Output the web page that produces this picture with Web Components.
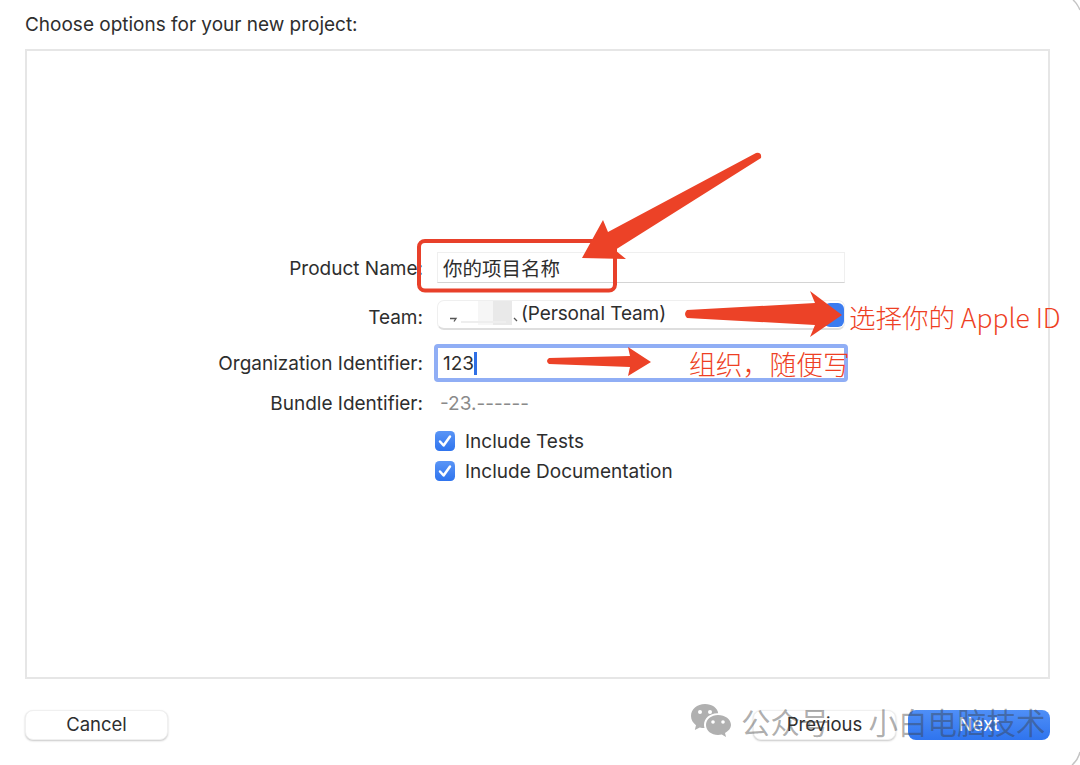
<!DOCTYPE html>
<html lang="en"><head><meta charset="utf-8"><title>Choose options</title>
<style>
html,body{margin:0;padding:0;background:#fff}
body{width:1080px;height:765px;overflow:hidden;font-family:Inter,"Noto Sans CJK SC",sans-serif;color:#2e2e2e}
</style></head><body>
<x-sheet>
  <span slot="title">Choose options for your new project:</span>
  <x-row label="Product Name:" h="31" top="0" nudge="1"><x-field>你的项目名称</x-field></x-row>
  <x-row label="Team:" h="30" top="17" nudge="2"><x-popup>(Personal Team)</x-popup></x-row>
  <x-row label="Organization Identifier:" h="36" top="14"><x-field focused>123</x-field></x-row>
  <x-row label="Bundle Identifier:" h="20" top="12"><span style="color:#8a8a8a;padding-left:3px">-23.------</span></x-row>
  <x-row h="24" top="17"><x-check>Include Tests</x-check></x-row>
  <x-row h="24" top="6"><x-check>Include Documentation</x-check></x-row>
  <x-button slot="left">Cancel</x-button>
  <x-button slot="right">Previous</x-button>
  <x-button slot="right" primary>Next</x-button>
</x-sheet>
<x-annotations></x-annotations>
<x-watermark></x-watermark>
<script>
function def(name, html, setup){
  customElements.define(name, class extends HTMLElement{
    constructor(){super();this.attachShadow({mode:'open'}).innerHTML=html;}
    connectedCallback(){ if(setup) setup(this,this.shadowRoot); }
  });
}
def('x-sheet',`<style>
:host{display:flex;flex-direction:column;width:1080px;height:765px;box-sizing:border-box;padding:0 30px 25px 25px}
.title{height:49px;box-sizing:border-box;padding-top:14px;font-size:19px;line-height:22px;letter-spacing:-.01px}
.panel{height:630px;box-sizing:border-box;border:2px solid #e6e6e6;background:#fff;padding-top:201px;display:flex;flex-direction:column}
.foot{display:flex;justify-content:space-between;margin-top:31px}
.r{display:flex;gap:12px}
</style>
<div class="title"><slot name="title"></slot></div>
<div class="panel"><slot></slot></div>
<div class="foot"><div class="r"><slot name="left"></slot></div><div class="r"><slot name="right"></slot></div></div>`);
def('x-row',`<style>
:host{display:grid;grid-template-columns:396px 408px;column-gap:14px;align-items:center;font-size:19px}
.l{text-align:right;white-space:nowrap}
.c{display:flex;align-items:center;min-width:0}
</style><div class="l"></div><div class="c"><slot></slot></div>`,(el,sr)=>{
  el.style.height=el.getAttribute('h')+'px';
  el.style.marginTop=(el.getAttribute('top')||0)+'px';
  const l=sr.querySelector('.l');l.textContent=el.getAttribute('label')||'';
  const n=el.getAttribute('nudge'); if(n) l.style.paddingTop=(2*n)+'px';
});
def('x-field',`<style>
:host{display:flex;flex:none;align-items:center;box-sizing:border-box;width:408px;height:31px;background:#fff;border:1px solid #efefef;border-bottom:1px solid #d4d4d4;padding-left:5px;font-size:19.500px;font-family:Inter,"Noto Sans CJK SC",sans-serif;white-space:nowrap}
:host([focused]){height:38px;width:414px;margin-left:-3px;border:4px solid #90aef5;border-radius:4px;padding-left:5px;font-size:19px}
.caret{display:none;width:3px;height:23px;background:#2f6fe6;margin-left:0}
:host([focused]) .caret{display:block}
</style><slot></slot><span class="caret"></span>`);
def('x-popup',`<style>
:host{display:flex;align-items:center;box-sizing:border-box;width:408px;height:30px;background:#fff;border:1px solid #efefef;border-bottom:2px solid #dedede;border-radius:7px;font-size:19px;letter-spacing:-.12px;white-space:nowrap;padding-bottom:3px}
.blur{display:flex;align-items:stretch;width:66px;height:24px;margin:0 7px 0 10px;flex:none;position:relative}
.blur i{display:block}
.blur svg{position:absolute;left:0;top:0}
.text{flex:1}
.btn{flex:none;width:20px;height:24px;margin-top:3px;background:#3b7cf0;border-radius:6px}
</style><span class="blur"><i style="width:30px"></i><i style="width:15px;background:#f6f6f6"></i><i style="width:19px;background:#e9e9e9"></i>
<svg width="76" height="24" viewBox="0 0 76 24"><path d="M2 17.500h6l-2 3M66 17l3 3" fill="none" stroke="#555" stroke-width="1.300"/><path d="M13 21h45" stroke="#eee" stroke-width="2"/></svg></span><span class="text"><slot></slot></span><span class="btn"></span>`);
def('x-check',`<style>
:host{display:flex;align-items:center;gap:10px;margin-left:-2px;font-size:19px;white-space:nowrap}
svg{flex:none;display:block}
</style><svg width="20" height="20" viewBox="0 0 20 20"><defs><linearGradient id="g" x1="0" y1="0" x2="0" y2="1"><stop offset="0" stop-color="#5a95f6"/><stop offset="1" stop-color="#2f74ee"/></linearGradient></defs><rect width="20" height="20" rx="4.500" fill="url(#g)"/><path d="M5 10.500l3.600 4L15 5.500" fill="none" stroke="#fff" stroke-width="2.500" stroke-linecap="round" stroke-linejoin="round"/></svg><slot></slot>`);
def('x-button',`<style>
:host{display:flex;align-items:center;justify-content:center;box-sizing:border-box;width:143px;height:30px;padding-bottom:2px;background:#fff;border:1px solid #f0f0f0;border-radius:8px;box-shadow:0 1px 2px rgba(0,0,0,.22);font-size:18.500px;color:#2e2e2e}
:host([primary]){width:142px;background:linear-gradient(#4f8ff7,#2f74ee);border:0;box-shadow:none;color:#fff}
</style><slot></slot>`);
def('x-annotations',`<style>
:host{position:absolute;left:0;top:0;width:1080px;height:765px;pointer-events:none;display:block;font-family:"Noto Sans CJK SC",sans-serif;color:#ee3f24}
svg{position:absolute;left:0;top:0}
.t{position:absolute;white-space:nowrap;font-weight:300}
</style>
<svg width="1080" height="765" viewBox="0 0 1080 765">
<path d="M1073 0Q1077 3 1080 10" fill="none" stroke="#c4c4c4" stroke-width="1.500"/>
<path d="M1080 752Q1078 760 1072 765" fill="none" stroke="#c4c4c4" stroke-width="1.500"/>
<rect x="419" y="241" width="196" height="49.500" rx="6" fill="none" stroke="#e8402a" stroke-width="4"/>
<path d="M582 258L603 220L608 232L756 153Q762 152 761 158L615 250L626 259Z" fill="#ec4227"/>
<path d="M687 310L815 303L810 291L842 315L810 337L815 325L687 318Q683 314 687 310Z" fill="#ec4227"/>
<path d="M549 358L630 356L628 347L651 362L628 376L630 367L549 364Q545 361 549 358Z" fill="#ec4227"/>
</svg>
<span class="t" style="left:849px;top:299px;font-size:26.500px;line-height:36px">选择你的 Apple ID</span>
<span class="t" style="left:689px;top:346px;font-size:26.800px;line-height:36px">组织，随便写</span>`);
def('x-watermark',`<style>
:host{position:absolute;left:690px;top:702px;display:flex;align-items:center;pointer-events:none;font-family:"Noto Sans CJK SC",sans-serif;font-size:29.500px;line-height:38px;color:rgba(60,60,60,.42);white-space:nowrap}
svg{display:block;flex:none;margin-right:9px}
.a{margin-right:39px}
</style><svg width="42" height="36" viewBox="0 0 42 36"><path d="M15 1C7 1 1 6.200 1 13c0 3.800 2 7 5 9.200L4.800 27l5-2.600c1.500.4 3 .6 4.700.6-.4-1.200-.5-2.300-.5-3.300 0-6.500 6-11.500 13.200-11.500h1C27.500 4.800 22 1 15 1z" fill="#b0b0b0"/><path d="M28 12c-6.500 0-12 4.300-12 10s5.500 10 12 10c1.300 0 2.600-.2 3.800-.5L36 34l-1-4c3.600-2 6-4.700 6-8 0-5.700-6-10-13-10z" fill="#b0b0b0"/><circle cx="10" cy="9" r="2" fill="#fff"/><circle cx="20" cy="9" r="2" fill="#fff"/><circle cx="23" cy="19" r="1.800" fill="#fff"/><circle cx="33" cy="19" r="1.800" fill="#fff"/></svg><span class="a">公众号</span><span>小白电脑技术</span>`);
</script>
</body></html>
